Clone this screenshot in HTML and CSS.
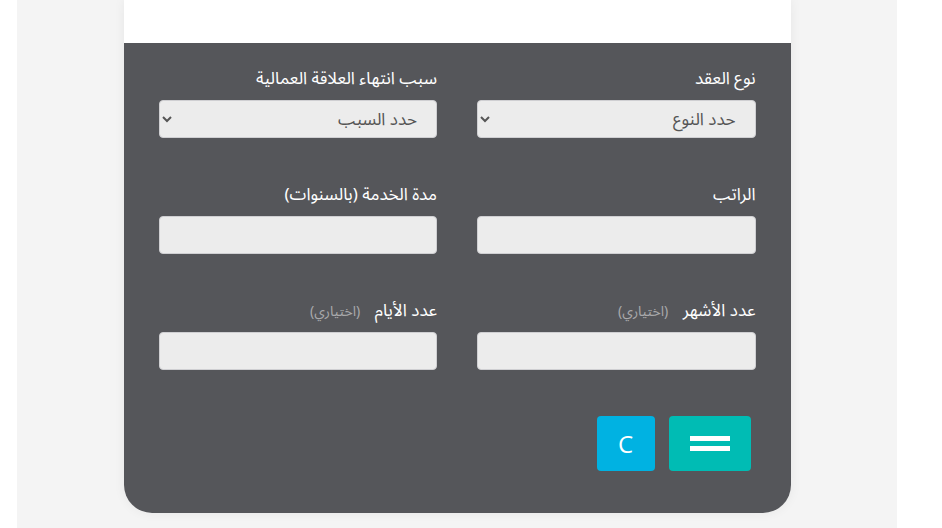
FILE: index.html
```html
<!DOCTYPE html>
<html lang="ar">
<head>
    <meta charset="utf-8">
    <title>حاسبة مكافأة نهاية الخدمة</title>
    <link rel="stylesheet" href="styles.css">
</head>
<body>
    <div class="page">
        <div class="card" dir="rtl">
            <div class="card-top"></div>
            <form class="calc">
                <div class="grid">
                    <div class="field">
                        <label class="label">نوع العقد</label>
                        <select class="input">
                            <option>حدد النوع</option>
                        </select>
                    </div>
                    <div class="field">
                        <label class="label">سبب انتهاء العلاقة العمالية</label>
                        <select class="input">
                            <option>حدد السبب</option>
                        </select>
                    </div>
                    <div class="field">
                        <label class="label">الراتب</label>
                        <input class="input" type="text">
                    </div>
                    <div class="field">
                        <label class="label">مدة الخدمة (بالسنوات)</label>
                        <input class="input" type="text">
                    </div>
                    <div class="field">
                        <label class="label">عدد الأشهر <span class="optional">(اختياري)</span></label>
                        <input class="input" type="text">
                    </div>
                    <div class="field">
                        <label class="label">عدد الأيام <span class="optional">(اختياري)</span></label>
                        <input class="input" type="text">
                    </div>
                </div>
                <div class="actions">
                    <button type="button" class="btn btn-calc">
                        <span class="bars"><i></i><i></i></span>
                    </button>
                    <button type="reset" class="btn btn-clear">C</button>
                </div>
            </form>
        </div>
    </div>
</body>
</html>
```

FILE: styles.css
```css
body {
    margin: 0;
    background: #fff;
    font-family: "Noto Sans Arabic", "DejaVu Sans", sans-serif;
}
.page {
    width: 880px;
    height: 528px;
    margin-left: 17px;
    background: #f4f4f4;
    overflow: hidden;
}
.card {
    width: 667px;
    margin: 0 auto;
    background: #fff;
    border-radius: 0 0 28px 28px;
    box-shadow: 0 0 12px rgba(0, 0, 0, 0.06);
}
.card-top {
    height: 43px;
}
.calc {
    background: #55565a;
    border-radius: 0 0 28px 28px;
    padding: 24px 35px 42px;
}
.grid {
    display: grid;
    grid-template-columns: 1fr 1fr;
    column-gap: 40px;
    row-gap: 45px;
}
.field {
    display: flex;
    flex-direction: column;
}
.label {
    color: #fff;
    font-size: 17px;
    line-height: 24px;
    height: 24px;
    margin-bottom: 9px;
}
.optional {
    color: #a9a9ab;
    font-size: 14px;
    line-height: 1;
    margin-right: 10px;
}
.input {
    box-sizing: border-box;
    height: 38px;
    width: 100%;
    background: #ececec;
    border: 1px solid #cfcfd2;
    border-radius: 4px;
    padding: 0 15px;
    font-family: inherit;
    font-size: 17px;
    color: #555;
}
.actions {
    display: flex;
    gap: 14px;
    margin-top: 46px;
    padding-right: 5px;
}
.btn {
    height: 55px;
    border: none;
    border-radius: 4px;
    color: #fff;
    cursor: pointer;
    padding: 0;
}
.btn-calc {
    width: 82px;
    background: #00bcb4;
}
.btn-clear {
    width: 58px;
    background: #00b2e2;
    font-family: "Open Sans", sans-serif;
    font-size: 24px;
}
.bars {
    display: flex;
    flex-direction: column;
    gap: 5px;
    width: 40px;
    margin: 0 auto;
}
.bars i {
    display: block;
    height: 5px;
    background: #fff;
}
```
